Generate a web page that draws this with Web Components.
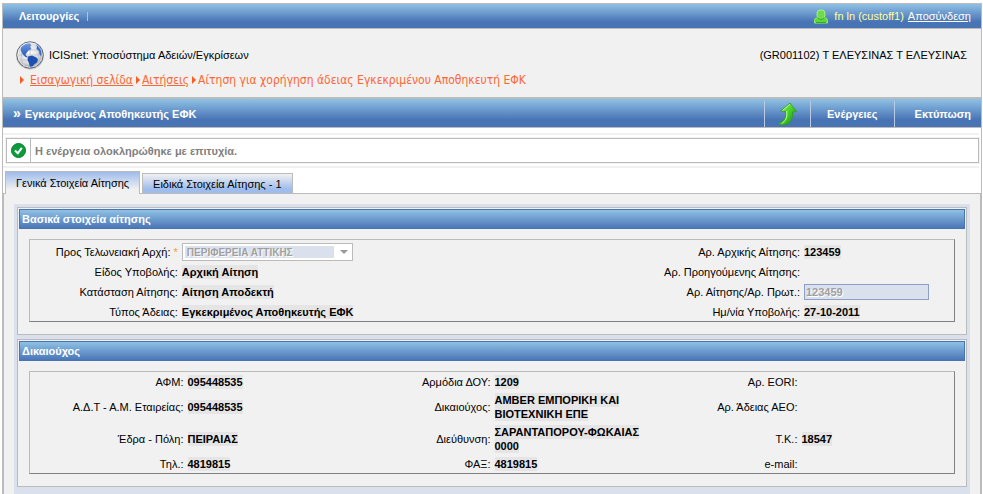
<!DOCTYPE html>
<html lang="el">
<head>
<meta charset="utf-8">
<title>ICISnet</title>
<style>
    body {
        margin: 0;
        background: #fff;
        color: #000;
        font: 11px/14px "Liberation Sans", Arial, sans-serif;
    }
</style>
</head>
<body>
<app-page>
    <top-bar slot="top" user="fn ln (custoff1)">Λειτουργίες</top-bar>
    <app-header slot="top" name="ICISnet: Υποσύστημα Αδειών/Εγκρίσεων" office="(GR001102) Τ ΕΛΕΥΣΙΝΑΣ Τ ΕΛΕΥΣΙΝΑΣ">
        <bread-crumb link>Εισαγωγική σελίδα</bread-crumb>
        <bread-crumb link>Αιτήσεις</bread-crumb>
        <bread-crumb>Αίτηση για χορήγηση άδειας Εγκεκριμένου Αποθηκευτή ΕΦΚ</bread-crumb>
    </app-header>
    <title-bar slot="top">Εγκεκριμένος Αποθηκευτής ΕΦΚ</title-bar>
    <status-message slot="top">Η ενέργεια ολοκληρώθηκε με επιτυχία.</status-message>
    <tab-list slot="top" tabs="Γενικά Στοιχεία Αίτησης|Ειδικά Στοιχεία Αίτησης - 1"></tab-list>

    <form-section>
        <span slot="heading">Βασικά στοιχεία αίτησης</span>
        <form-field wide required type="select" label="Προς Τελωνειακή Αρχή:" value="ΠΕΡΙΦΕΡΕΙΑ ΑΤΤΙΚΗΣ"></form-field>
        <form-field label="Αρ. Αρχικής Αίτησης:" value="123459"></form-field>
        <form-field wide label="Είδος Υποβολής:" value="Αρχική Αίτηση"></form-field>
        <form-field label="Αρ. Προηγούμενης Αίτησης:"></form-field>
        <form-field wide label="Κατάσταση Αίτησης:" value="Αίτηση Αποδεκτή"></form-field>
        <form-field type="text" label="Αρ. Αίτησης/Αρ. Πρωτ.:" value="123459"></form-field>
        <form-field wide label="Τύπος Άδειας:" value="Εγκεκριμένος Αποθηκευτής ΕΦΚ"></form-field>
        <form-field label="Ημ/νία Υποβολής:" value="27-10-2011"></form-field>
    </form-section>

    <form-section dense>
        <span slot="heading">Δικαιούχος</span>
        <form-field label="ΑΦΜ:" value="095448535"></form-field>
        <form-field label="Αρμόδια ΔΟΥ:" value="1209"></form-field>
        <form-field label="Αρ. EORI:"></form-field>
        <form-field label="Α.Δ.Τ - Α.Μ. Εταιρείας:" value="095448535"></form-field>
        <form-field label="Δικαιούχος:" value="AMBER ΕΜΠΟΡΙΚΗ ΚΑΙ ΒΙΟΤΕΧΝΙΚΗ ΕΠΕ"></form-field>
        <form-field label="Αρ. Άδειας ΑΕΟ:"></form-field>
        <form-field label="Έδρα - Πόλη:" value="ΠΕΙΡΑΙΑΣ"></form-field>
        <form-field label="Διεύθυνση:" value="ΣΑΡΑΝΤΑΠΟΡΟΥ-ΦΩΚΑΙΑΣ 0000"></form-field>
        <form-field label="Τ.Κ.:" value="18547"></form-field>
        <form-field label="Τηλ.:" value="4819815"></form-field>
        <form-field label="ΦΑΞ:" value="4819815"></form-field>
        <form-field label="e-mail:"></form-field>
    </form-section>
</app-page>

<script>
const BAR = "linear-gradient(#8fc1e5, #4873b4 75%)";

class AppPage extends HTMLElement {
    constructor() {
        super();
        this.attachShadow({ mode: "open" });
        this.shadowRoot.innerHTML = `
            <style>
                :host {
                    display: flex;
                    flex-direction: column;
                    box-sizing: border-box;
                    min-height: calc(100vh - 3px);
                    margin: 3px 1px 0 2px;
                    border: 1px solid #bbb;
                    border-bottom: 0;
                }

                main {
                    flex: 1;
                    display: flex;
                    flex-direction: column;
                    padding: 10px 10px 0;
                    background: #f1f1f1;
                    border: 1px solid #bbb;
                    border-bottom: 0;
                }

                .sheet {
                    flex: 1;
                    display: flex;
                    flex-direction: column;
                    gap: 4px;
                    padding: 3px 3px 7px;
                    background: #dae1ed;
                }
            </style>
            <slot name="top"></slot>
            <main><div class="sheet"><slot></slot></div></main>
        `;
    }
}
customElements.define("app-page", AppPage);

class TopBar extends HTMLElement {
    constructor() {
        super();
        this.attachShadow({ mode: "open" });
        this.shadowRoot.innerHTML = `
            <style>
                :host {
                    display: flex;
                    align-items: center;
                    height: 24px;
                    padding: 0 10px 0 16px;
                    background: ${BAR};
                    border-bottom: 1px solid #bbb;
                    color: #fff;
                }

                button {
                    padding: 0 8px 0 0;
                    background: none;
                    border: 0;
                    border-right: 1px solid #a9c3e2;
                    color: inherit;
                    font: bold 11px/9px "Liberation Sans", Arial, sans-serif;
                }

                svg { margin: 0 6px 0 auto; }
                .user { color: #ffff9c; margin-right: 4px; }
                a { color: inherit; }
            </style>
            <button type="button"><slot></slot></button>
            <svg width="14" height="15" viewBox="0 0 14 15">
                <path d="M.5 14V11.500q0-3 3.500-3h6q3.500 0 3.500 3V14z" fill="#5fd63c" stroke="#8cf068"/>
                <rect x="3" y="1" width="8" height="8.500" rx="3.200" fill="#6edb4c" stroke="#a6f588"/>
                <path d="M3.500 8.500q3.500 3.500 7 0" fill="none" stroke="#2f9a1c"/>
                <path d="M2 13.500h10" stroke="#36a820"/>
            </svg>
            <span class="user"></span>
            <a href="#">Αποσύνδεση</a>
        `;
        this.shadowRoot.querySelector(".user").textContent = this.getAttribute("user");
    }
}
customElements.define("top-bar", TopBar);

class AppHeader extends HTMLElement {
    constructor() {
        super();
        this.attachShadow({ mode: "open" });
        this.shadowRoot.innerHTML = `
            <style>
                :host {
                    display: block;
                    padding: 11px 14px 10px 12px;
                    background: #f1f1f1;
                    border-bottom: 2px solid #bbb;
                }

                .row { display: flex; align-items: center; gap: 4px; }
                .office { margin-left: auto; }

                nav {
                    display: flex;
                    gap: 3px;
                    padding: 3px 5px 0;
                }
            </style>
            <div class="row">
                <svg width="30" height="30" viewBox="0 0 30 30">
                    <defs>
                        <radialGradient id="ball" cx=".45" cy=".4" r=".6">
                            <stop offset="0" stop-color="#fff"/>
                            <stop offset=".7" stop-color="#d8dadd"/>
                            <stop offset="1" stop-color="#94979c"/>
                        </radialGradient>
                        <linearGradient id="land" x2="0" y2="1">
                            <stop offset="0" stop-color="#6f9be2"/>
                            <stop offset="1" stop-color="#2257b8"/>
                        </linearGradient>
                    </defs>
                    <circle cx="15" cy="15.700" r="14" fill="#aaa" opacity=".5"/>
                    <circle cx="15" cy="15" r="13.200" fill="url(#ball)" stroke="#63666b"/>
                    <path d="M3 10h24M2 15h26M3 20h24M15 2v26M9 3q-5 12 0 24M21 3q5 12 0 24" fill="none" stroke="#bfc2c6" stroke-width=".8"/>
                    <path d="M5.500 8Q9 3.500 14.500 3l2 2.500-1.500 1 1.500 2.500-3 1.500-2 2.500-1 2 3 2.500-3-.5-3-3-1.500-3z" fill="url(#land)"/>
                    <path d="M13 16.500l4-1 4.500 2 1.500 2-1 3-3 2-2 3h-2l-1-4.500-1.500-3z" fill="#1d50b2"/>
                    <path d="M20.500 4q5 2 6.500 7.500l-.5 5-2-2-.5-3.500-2.500-2 .5-2.500z" fill="#3a6cc9"/>
                    <circle cx="15" cy="15" r="12.200" fill="none" stroke="#fff" stroke-width=".8" opacity=".7"/>
                </svg>
                <span class="name"></span>
                <span class="office"></span>
            </div>
            <nav><slot></slot></nav>
        `;
        this.shadowRoot.querySelector(".name").textContent = this.getAttribute("name");
        this.shadowRoot.querySelector(".office").textContent = this.getAttribute("office");
    }
}
customElements.define("app-header", AppHeader);

class BreadCrumb extends HTMLElement {
    constructor() {
        super();
        this.attachShadow({ mode: "open" });
        const tag = this.hasAttribute("link") ? `a href="#"` : "span";
        this.shadowRoot.innerHTML = `
            <style>
                :host {
                    display: flex;
                    align-items: center;
                    gap: 2px;
                    color: #ff6633;
                    font: 12px/14px "DejaVu Sans Condensed", Verdana, sans-serif;
                }

                :host(:first-child) { gap: 6px; }
                :host::before {
                    content: "";
                    border: solid transparent;
                    border-width: 4px 0 4px 4px;
                    border-left-color: #ff5a1f;
                }
                a { color: inherit; }
            </style>
            <${tag}><slot></slot></${tag.split(" ")[0]}>
        `;
    }
}
customElements.define("bread-crumb", BreadCrumb);

class TitleBar extends HTMLElement {
    constructor() {
        super();
        this.attachShadow({ mode: "open" });
        this.shadowRoot.innerHTML = `
            <style>
                :host {
                    display: flex;
                    align-items: center;
                    height: 28px;
                    padding-left: 10px;
                    background: ${BAR};
                    border-bottom: 1px solid #bbb;
                    color: #fff;
                    font-weight: bold;
                }

                h1 { margin: 0 auto 0 0; font: inherit; }
                h1::before { content: "»"; font-size: 14px; margin-right: 4px; }

                button {
                    align-self: stretch;
                    margin-top: 2px;
                    padding: 0 16px;
                    background: none;
                    border: 0;
                    border-left: 1px solid #b9cbe4;
                    color: inherit;
                    font: inherit;
                }

                .icon { padding: 0 12px; }
                .icon svg { display: block; }
                .last { padding: 0 10px 0 20px; }
            </style>
            <h1><slot></slot></h1>
            <button type="button" class="icon" aria-label="Επιστροφή">
                <svg width="21" height="24" viewBox="0 0 21 24">
                    <defs>
                        <linearGradient id="up" x2="1" y2="1">
                            <stop offset="0" stop-color="#a5f26f"/>
                            <stop offset=".5" stop-color="#45cf25"/>
                            <stop offset="1" stop-color="#168a12"/>
                        </linearGradient>
                    </defs>
                    <path d="M1.500 21.500Q8.500 19 8.500 13V9.500L3.500 9 13 1l6.500 8.500-4 .5v4q-1 9-11.500 9z" fill="url(#up)" stroke="#2a9c20" stroke-width=".8" stroke-linejoin="round"/>
                    <path d="M5.500 8.500L13 2.300M9.800 9v5q0 4.500-5 7.500" fill="none" stroke="#c3f8a0"/>
                </svg>
            </button>
            <button type="button">Ενέργειες</button>
            <button type="button" class="last">Εκτύπωση</button>
        `;
    }
}
customElements.define("title-bar", TitleBar);

class StatusMessage extends HTMLElement {
    constructor() {
        super();
        this.attachShadow({ mode: "open" });
        this.shadowRoot.innerHTML = `
            <style>
                :host {
                    display: block;
                    margin: 5px 2px 3px 0;
                    padding: 3px 0;
                    border: solid #f1f1f1;
                    border-width: 2px 0;
                }

                .box {
                    display: flex;
                    align-items: center;
                    height: 23px;
                    margin-left: 3px;
                    border: 1px solid #bbb;
                    outline: 1px solid #f1f1f1;
                    color: #808080;
                    font-weight: bold;
                }

                .icon {
                    display: flex;
                    align-items: center;
                    align-self: stretch;
                    padding: 0 4px;
                    margin-right: 4px;
                    border-right: 1px solid #bbb;
                }
            </style>
            <div class="box" role="status">
                <span class="icon">
                    <svg width="15" height="15" viewBox="0 0 15 15">
                        <circle cx="7.500" cy="7.500" r="7" fill="#0c9b3c" stroke="#0a7c30"/>
                        <path d="M4 7.500l2.800 2.800 4-5.500" fill="none" stroke="#fff" stroke-width="2"/>
                    </svg>
                </span>
                <slot></slot>
            </div>
        `;
    }
}
customElements.define("status-message", StatusMessage);

class TabList extends HTMLElement {
    constructor() {
        super();
        this.attachShadow({ mode: "open" });
        this.shadowRoot.innerHTML = `
            <style>
                :host { display: block; }

                div {
                    display: flex;
                    align-items: flex-end;
                    gap: 2px;
                    padding-left: 2px;
                }

                button {
                    height: 20px;
                    padding: 0 10px;
                    background: linear-gradient(#f1f1f1, #9ebcec 80%);
                    border: 1px solid #bbb;
                    border-bottom: 0;
                    color: #000;
                    font: inherit;
                }

                button[aria-selected="true"] {
                    height: 23px;
                    margin-bottom: -1px;
                    background: linear-gradient(#9ebcec, #f1f1f1 80%);
                    position: relative;
                }
            </style>
            <div role="tablist"></div>
        `;
        this.renderTabs();
    }

    renderTabs() {
        this.getAttribute("tabs").split("|").forEach((text, index) => {
            const tab = document.createElement("button");
            tab.type = "button";
            tab.setAttribute("role", "tab");
            tab.setAttribute("aria-selected", index === 0);
            tab.textContent = text;
            tab.onclick = () => this.select(tab);
            this.shadowRoot.querySelector("div").appendChild(tab);
        });
    }

    select(active) {
        this.shadowRoot.querySelectorAll("button").forEach(tab => {
            tab.setAttribute("aria-selected", tab === active);
        });
    }
}
customElements.define("tab-list", TabList);

class FormSection extends HTMLElement {
    constructor() {
        super();
        this.attachShadow({ mode: "open" });
        this.shadowRoot.innerHTML = `
            <style>
                :host {
                    display: block;
                    padding: 1px;
                    background: #f1f1f1;
                    border: 1px solid #bbb;
                }

                h2 {
                    margin: 0;
                    padding: 2px;
                    background: linear-gradient(#8fc1e5, #4a76b7);
                    border: 1px solid #4873b4;
                    color: #fff;
                    font: bold 11px/14px "Liberation Sans", Arial, sans-serif;
                }

                .fields {
                    display: grid;
                    grid-template-columns: repeat(3, 1fr);
                    grid-auto-rows: minmax(16px, auto);
                    gap: 4px 0;
                    align-items: center;
                    margin: 10px 10px 11px;
                    padding: 4px 0 1px;
                    border: 1px solid;
                    border-color: #bbb #808080 #808080 #bbb;
                }

                :host([dense]) .fields {
                    grid-auto-rows: auto;
                    padding: 3px 3px 2px 0;
                }
            </style>
            <h2><slot name="heading"></slot></h2>
            <div class="fields"><slot></slot></div>
        `;
    }
}
customElements.define("form-section", FormSection);

class FormField extends HTMLElement {
    constructor() {
        super();
        this.attachShadow({ mode: "open" });
        const label = this.getAttribute("label");
        const value = this.getAttribute("value") || "";
        const star = this.hasAttribute("required") ? ` <i>*</i>` : "";

        this.shadowRoot.innerHTML = `
            <style>
                :host {
                    display: grid;
                    grid-template-columns: 50% 1fr;
                    gap: 4px;
                    align-items: center;
                }

                :host([wide]) {
                    grid-column: span 2;
                    grid-template-columns: 24% 1fr;
                }

                label, .label { text-align: right; }
                i { color: #f0a030; font-style: normal; }
                b { background: #e5e5e5; padding: 1px 0; }

                input, select {
                    box-sizing: border-box;
                    display: block;
                    margin: 0;
                    border-radius: 0;
                    color: #a0a0a0;
                    opacity: 1;
                    text-shadow: 1px 1px #fff;
                }

                input {
                    width: 125px;
                    height: 16px;
                    padding: 0 1px;
                    background: #dae1ed;
                    border: 1px solid #8c9fc6;
                    font: bold 11px/14px "Liberation Sans", Arial, sans-serif;
                }

                .select { position: relative; width: 171px; margin: -1px 0; }

                select {
                    appearance: none;
                    width: 100%;
                    height: 18px;
                    padding: 1px 20px 0 4px;
                    background: linear-gradient(#dae1ed, #dae1ed) 2px 2px / calc(100% - 20px) 12px no-repeat #fff;
                    border: 1px solid #bbb;
                    font: bold 10px/14px "Liberation Sans", Arial, sans-serif;
                }

                .select::after {
                    content: "";
                    position: absolute;
                    right: 5px;
                    top: 7px;
                    border: solid transparent;
                    border-width: 4px 4px 0;
                    border-top-color: #999;
                }
            </style>
            ${this.renderField(label + star, value)}
        `;
    }

    renderField(label, value) {
        switch (this.getAttribute("type")) {
            case "select":
                return `<label for="control">${label}</label>
                    <span class="select"><select id="control" disabled><option>${value}</option></select></span>`;
            case "text":
                return `<label for="control">${label}</label><input id="control" type="text" value="${value}" disabled>`;
            default:
                return `<span class="label">${label}</span><span><b>${value}</b></span>`;
        }
    }
}
customElements.define("form-field", FormField);
</script>
</body>
</html>
